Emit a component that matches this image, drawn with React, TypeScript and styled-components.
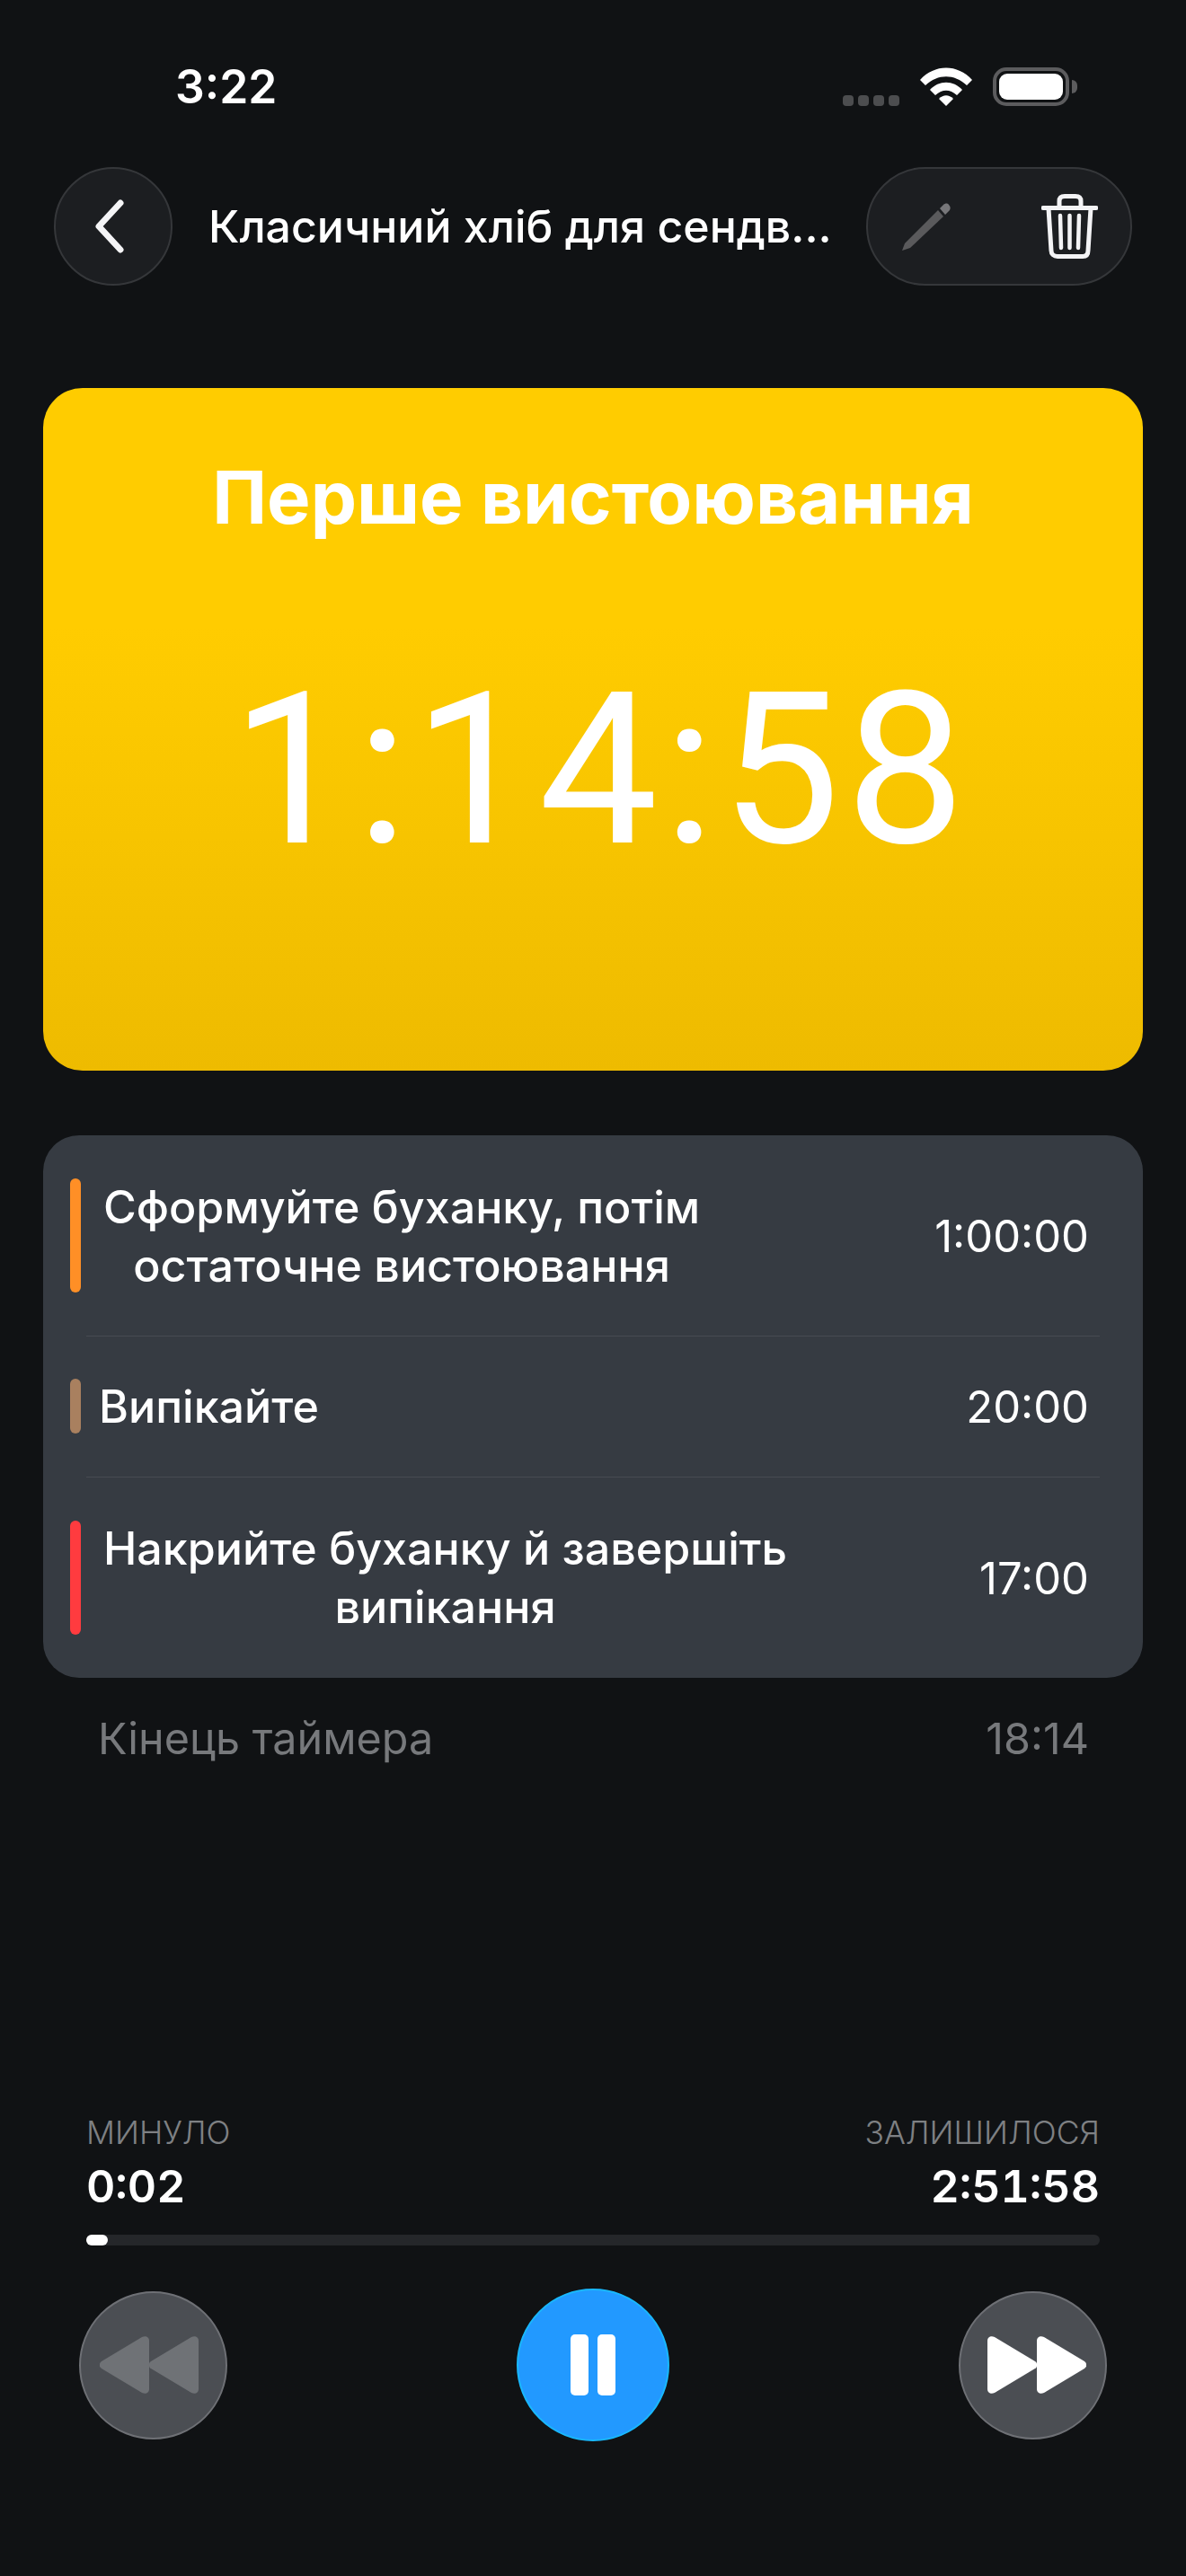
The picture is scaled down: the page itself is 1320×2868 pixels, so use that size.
import React from "react";
import styled, { createGlobalStyle } from "styled-components";

const GlobalStyle = createGlobalStyle`
  html, body {
    margin: 0;
    padding: 0;
    background: #101214;
  }
  * {
    box-sizing: border-box;
  }
`;

type Step = {
  title: React.ReactNode;
  time: string;
  color: string;
  height: number;
  multiline?: boolean;
};

const steps: Step[] = [
  {
    title: (
      <>
        Сформуйте буханку, потім
        <br />
        остаточне вистоювання
      </>
    ),
    time: "1:00:00",
    color: "#ff8f26",
    height: 223,
    multiline: true,
  },
  { title: "Випікайте", time: "20:00", color: "#a9805f", height: 157 },
  {
    title: (
      <>
        Накрийте буханку й завершіть
        <br />
        випікання
      </>
    ),
    time: "17:00",
    color: "#ff3b3f",
    height: 224,
    multiline: true,
  },
];

export default function App() {
  return (
    <Screen>
      <GlobalStyle />
      <StatusBar>
        <Clock>3:22</Clock>
        <StatusIcons>
          <SignalDots>
            <i />
            <i />
            <i />
            <i />
          </SignalDots>
          <svg width="58" height="43" viewBox="0 0 58 43">
            <path fill="#fff" d="M0 14 C16 -4 42 -4 58 14 L52 20 C38 7 20 7 6 20 Z" />
            <path fill="#fff" d="M11 25 C21 14 37 14 47 25 L41 31 C33 24 25 24 17 31 Z" />
            <path fill="#fff" d="M21 35 C26 30 32 30 37 35 L29 43 Z" />
          </svg>
          <Battery>
            <BatteryFill />
          </Battery>
        </StatusIcons>
      </StatusBar>

      <Header>
        <BackButton>
          <svg width="44" height="64" viewBox="0 0 44 64" fill="none">
            <path d="M33 6 L9 32 L33 58" stroke="#f4f4f6" strokeWidth="7" strokeLinecap="round" strokeLinejoin="round" />
          </svg>
        </BackButton>
        <Title>Класичний хліб для сендв...</Title>
        <ActionPill>
          <svg width="54" height="53" viewBox="0 0 54 53">
            <path fill="#5a5a5c" d="M0 53 L3 45 L40 8 L46 15 L9 50 Z" />
            <path fill="#77777a" d="M42 6 L46 2 C48 0 51 0 52 2 C54 4 54 6 53 8 L48 13 Z" />
          </svg>
          <svg width="63" height="72" viewBox="0 0 63 72" fill="none" stroke="#f3f3f5" strokeWidth="5">
            <path d="M2 15.5 H61" strokeLinecap="round" />
            <path d="M20 15 V8 C20 4 22 2.500 26 2.500 H38 C42 2.500 44 4 44 8 V15" />
            <path d="M8 16 L11 63 C11 67 14 69.500 18 69.500 H46 C50 69.500 52 67 52 63 L55 16" />
            <path d="M21 24 L22 60 M31.500 24 V60 M42 24 L41 60" strokeLinecap="round" strokeWidth="4.500" />
          </svg>
        </ActionPill>
      </Header>

      <TimerCard>
        <StepName>Перше вистоювання</StepName>
        <Countdown>1:14:58</Countdown>
      </TimerCard>

      <StepList>
        {steps.map((step, i) => (
          <StepRow key={i} $divided={i > 0} $height={step.height}>
            <StepBar $color={step.color} $multiline={step.multiline} />
            <StepTitle $multiline={step.multiline}>{step.title}</StepTitle>
            <StepTime>{step.time}</StepTime>
          </StepRow>
        ))}
      </StepList>

      <EndRow>
        <span>Кінець таймера</span>
        <span>18:14</span>
      </EndRow>

      <Footer>
        <Progress>
          <ProgressColumn>
            <ProgressLabel>МИНУЛО</ProgressLabel>
            <ProgressValue>0:02</ProgressValue>
          </ProgressColumn>
          <ProgressColumn $right>
            <ProgressLabel>ЗАЛИШИЛОСЯ</ProgressLabel>
            <ProgressValue>2:51:58</ProgressValue>
          </ProgressColumn>
        </Progress>
        <Track>
          <Thumb />
        </Track>
        <Controls>
          <RoundButton $nudge="right">
            <svg width="112" height="64" viewBox="0 0 112 64" fill="#6f7276">
              <path d="M2 28 L47 1 C51 -1 55 1 55 5 V59 C55 63 51 65 47 63 L2 36 C-1 34 -1 30 2 28 Z" />
              <path d="M57 28 L102 1 C106 -1 110 1 110 5 V59 C110 63 106 65 102 63 L57 36 C54 34 54 30 57 28 Z" />
            </svg>
          </RoundButton>
          <PauseButton>
            <PauseBar />
            <PauseBar />
          </PauseButton>
          <RoundButton $nudge="left">
            <svg width="112" height="64" viewBox="0 0 112 64" fill="#fff">
              <path d="M55 28 L10 1 C6 -1 2 1 2 5 V59 C2 63 6 65 10 63 L55 36 C58 34 58 30 55 28 Z" />
              <path d="M110 28 L65 1 C61 -1 57 1 57 5 V59 C57 63 61 65 65 63 L110 36 C113 34 113 30 110 28 Z" />
            </svg>
          </RoundButton>
        </Controls>
      </Footer>
    </Screen>
  );
}

const Screen = styled.div`
  width: 1320px;
  height: 2868px;
  display: flex;
  flex-direction: column;
  background: #101214;
  color: #fff;
  font-family: Inter, "Noto Sans", sans-serif;
  overflow: hidden;
`;

const StatusBar = styled.div`
  display: flex;
  align-items: center;
  justify-content: space-between;
  height: 43px;
  margin-top: 75px;
  padding: 0 130px 0 195px;
`;

const Clock = styled.div`
  font-size: 51.500px;
  font-weight: 600;
  line-height: 43px;
`;

const StatusIcons = styled.div`
  display: flex;
  align-items: center;
  gap: 23px;
`;

const SignalDots = styled.div`
  display: flex;
  gap: 5px;
  align-self: flex-end;

  i {
    display: block;
    width: 12px;
    height: 12px;
    border-radius: 4px;
    background: #4c4d4f;
  }
`;

const Battery = styled.div`
  position: relative;
  width: 85px;
  height: 43px;
  padding: 3px;
  border: 4px solid #5c5c5e;
  border-radius: 15px;

  &::after {
    content: "";
    position: absolute;
    right: -13px;
    top: 10px;
    width: 6px;
    height: 15px;
    border-radius: 0 8px 8px 0;
    background: #5c5c5e;
  }
`;

const BatteryFill = styled.div`
  width: 100%;
  height: 100%;
  border-radius: 9px;
  background: #fff;
`;

const Header = styled.div`
  display: flex;
  align-items: center;
  height: 132px;
  margin-top: 68px;
  padding: 0 60px;
`;

const BackButton = styled.div`
  display: flex;
  align-items: center;
  justify-content: center;
  flex: none;
  width: 132px;
  height: 132px;
  padding-right: 6px;
  border-radius: 50%;
  background: #1c1e21;
  border: 2px solid #35373a;
`;

const Title = styled.div`
  flex: 1;
  margin-left: 40px;
  font-size: 50px;
  font-weight: 500;
  white-space: nowrap;
`;

const ActionPill = styled.div`
  display: flex;
  align-items: center;
  justify-content: space-between;
  flex: none;
  width: 296px;
  height: 132px;
  padding: 0 36px 0 38px;
  border-radius: 66px;
  background: #1c1e21;
  border: 2px solid #35373a;
`;

const TimerCard = styled.div`
  display: flex;
  flex-direction: column;
  align-items: center;
  height: 760px;
  margin: 114px 48px 0;
  border-radius: 44px;
  background: linear-gradient(180deg, #ffcc00 0%, #ffcc00 35%, #eebb00 100%);
`;

const StepName = styled.div`
  margin-top: 78px;
  font-size: 81.500px;
  line-height: 88px;
  font-weight: 700;
`;

const Countdown = styled.div`
  margin-top: 120px;
  padding-left: 18px;
  font-family: Roboto, "Liberation Sans", sans-serif;
  font-size: 236px;
  line-height: 280px;
  letter-spacing: 6.500px;
  font-weight: 400;
`;

const StepList = styled.div`
  display: flex;
  flex-direction: column;
  margin: 72px 48px 0;
  border-radius: 40px;
  background: #363b42;
`;

const StepRow = styled.div<{ $divided: boolean; $height: number }>`
  position: relative;
  display: flex;
  align-items: center;
  height: ${(p) => p.$height}px;
  padding: 0 60px 0 30px;

  ${(p) =>
    p.$divided &&
    `
    &::before {
      content: "";
      position: absolute;
      top: 0;
      left: 48px;
      right: 48px;
      height: 1px;
      background: #474b52;
    }
  `}
`;

const StepBar = styled.div<{ $color: string; $multiline?: boolean }>`
  flex: none;
  width: 12px;
  height: ${(p) => (p.$multiline ? "127px" : "61px")};
  border-radius: 6px;
  background: ${(p) => p.$color};
`;

const StepTitle = styled.div<{ $multiline?: boolean }>`
  flex: none;
  margin-left: ${(p) => (p.$multiline ? "25px" : "20px")};
  font-size: 50.200px;
  line-height: 65px;
  font-weight: 500;
  text-align: center;
`;

const StepTime = styled.div`
  margin-left: auto;
  padding-top: 2px;
  font-size: 49px;
  font-weight: 400;
`;

const EndRow = styled.div`
  display: flex;
  justify-content: space-between;
  margin-top: 38px;
  padding: 0 108px 0 109px;
  font-size: 48.500px;
  line-height: 60px;
  color: #77797c;
`;

const Footer = styled.div`
  display: flex;
  flex-direction: column;
  margin-top: auto;
  padding-bottom: 150px;
`;

const Progress = styled.div`
  display: flex;
  justify-content: space-between;
  padding: 0 96px;
`;

const ProgressColumn = styled.div<{ $right?: boolean }>`
  display: flex;
  flex-direction: column;
  align-items: ${(p) => (p.$right ? "flex-end" : "flex-start")};
`;

const ProgressLabel = styled.div`
  font-size: 35.500px;
  line-height: 44px;
  font-weight: 300;
  color: #7e8083;
`;

const ProgressValue = styled.div`
  margin-top: 7px;
  font-size: 50px;
  line-height: 60px;
  font-weight: 600;
  font-variant-numeric: tabular-nums;
`;

const Track = styled.div`
  height: 12px;
  margin: 24px 96px 0;
  border-radius: 6px;
  background: #25272a;
`;

const Thumb = styled.div`
  width: 24px;
  height: 12px;
  border-radius: 6px;
  background: #fff;
`;

const Controls = styled.div`
  display: flex;
  align-items: center;
  justify-content: space-between;
  margin-top: 48px;
  padding: 0 88px;
`;

const RoundButton = styled.div<{ $nudge: "left" | "right" }>`
  display: flex;
  align-items: center;
  justify-content: center;
  width: 165px;
  height: 165px;
  padding-${(p) => p.$nudge}: 7px;
  border-radius: 50%;
  background: #4b4e53;
  border: 2px solid #6e7075;
`;

const PauseButton = styled.div`
  display: flex;
  align-items: center;
  justify-content: center;
  gap: 10px;
  width: 170px;
  height: 170px;
  border-radius: 50%;
  background: #2299ff;
  border: 2px solid #19b8ff;
`;

const PauseBar = styled.div`
  width: 20px;
  height: 68px;
  border-radius: 5px;
  background: #fff;
`;
